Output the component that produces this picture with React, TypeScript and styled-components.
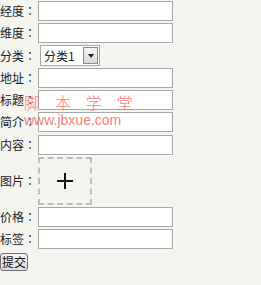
import styled, { createGlobalStyle } from "styled-components";

// page defaults: no body margin, off-white paper colour
const GlobalStyle = createGlobalStyle`
  body {
    margin: 0;
    background: #f5f5f0;
    font-family: "Noto Sans CJK SC", "Liberation Sans", sans-serif;
    font-size: 12px;
    color: #222;
  }
`;

const Page = styled.form`
  position: relative;
  display: flex;
  flex-direction: column;
  gap: 2.25px;
  padding-top: 1px;
  width: 261px;
`;

const Row = styled.div<{ $tall?: boolean }>`
  display: flex;
  align-items: center;
  height: ${(p) => (p.$tall ? "48px" : "20px")};
`;

const Label = styled.label`
  width: 36px;
  margin-right: 2px;
  white-space: nowrap;
  line-height: 20px;
`;

// full-width colon drawn centred in its cell, as in the reference
const Colon = styled.span`
  font-family: "Noto Sans CJK TC", "Noto Sans CJK SC", sans-serif;
`;

const TextInput = styled.input`
  box-sizing: border-box;
  width: 135px;
  height: 20px;
  border: 1px solid #a8a8a8;
  background: #fff;
  padding: 0 3px;
  font-size: 12px;
  outline: none;
`;

const SelectBox = styled.div`
  position: relative;
  box-sizing: border-box;
  margin-left: 2px;
  width: 60px;
  height: 21px;
  border: 1px solid #a8a8a8;
  background: #fff;
`;

const Select = styled.select`
  appearance: none;
  box-sizing: border-box;
  width: 100%;
  height: 100%;
  border: none;
  background: transparent;
  padding: 0 0 0 3px;
  font-family: "Noto Sans CJK SC", "Liberation Sans", sans-serif;
  font-size: 12px;
  color: #222;
`;

// the old-style grey drop button sits over the right end of the select
const DropButton = styled.span`
  position: absolute;
  top: 1px;
  right: 1px;
  bottom: 1px;
  width: 15px;
  box-sizing: border-box;
  border: 1px solid #8a8a8a;
  background: linear-gradient(#f4f4f4, #d8d8d8);
  display: flex;
  align-items: center;
  justify-content: center;
  pointer-events: none;
`;

const Arrow = styled.span`
  width: 0;
  height: 0;
  border-left: 3.5px solid transparent;
  border-right: 3.5px solid transparent;
  border-top: 4px solid #222;
`;

const Upload = styled.div`
  box-sizing: border-box;
  width: 54px;
  height: 48px;
  border: 2px dashed #bdbdbd;
  display: flex;
  align-items: center;
  justify-content: center;
`;

const SubmitButton = styled.button`
  align-self: flex-start;
  margin-top: 1px;
  height: 18px;
  padding: 0 1px;
  border: 1px solid #707070;
  border-radius: 3px;
  background: linear-gradient(#f2f2f2, #dedede);
  font-family: "Noto Sans CJK SC", "Liberation Sans", sans-serif;
  font-size: 12px;
  line-height: 14px;
  color: #111;
`;

// red site watermark stamped over the middle of the form
const Watermark = styled.div`
  position: absolute;
  left: 24px;
  top: 92px;
  color: #ee7474;
  opacity: 0.9;
  pointer-events: none;
`;

const MarkTitle = styled.div`
  font-size: 16px;
  font-weight: 300;
  line-height: 20px;
  letter-spacing: 5.7px;
`;

const MarkUrl = styled.div`
  font-family: "Liberation Sans", Arial, sans-serif;
  font-size: 14px;
  line-height: 16px;
`;

const fields = ["经度", "维度"];
const moreFields = ["地址", "标题", "简介", "内容"];

export default function App() {
  return (
    <>
      <GlobalStyle />
      <Page onSubmit={(e) => e.preventDefault()}>
        {fields.map((f) => (
          <Row key={f}>
            <Label>
              {f}
              <Colon>：</Colon>
            </Label>
            <TextInput />
          </Row>
        ))}
        <Row>
          <Label>
            分类<Colon>：</Colon>
          </Label>
          <SelectBox>
            <Select defaultValue="1">
              <option value="1">分类1</option>
            </Select>
            <DropButton>
              <Arrow />
            </DropButton>
          </SelectBox>
        </Row>
        {moreFields.map((f) => (
          <Row key={f}>
            <Label>
              {f}
              <Colon>：</Colon>
            </Label>
            <TextInput />
          </Row>
        ))}
        <Row $tall>
          <Label>
            图片<Colon>：</Colon>
          </Label>
          <Upload>
            <svg width="18" height="18" viewBox="0 0 18 18">
              <path d="M9 1v16M1 9h16" stroke="#111" strokeWidth="2" />
            </svg>
          </Upload>
        </Row>
        <Row>
          <Label>
            价格<Colon>：</Colon>
          </Label>
          <TextInput />
        </Row>
        <Row>
          <Label>
            标签<Colon>：</Colon>
          </Label>
          <TextInput />
        </Row>
        <SubmitButton type="submit">提交</SubmitButton>
        <Watermark>
          <MarkTitle>脚 本 学 堂</MarkTitle>
          <MarkUrl>www.jbxue.com</MarkUrl>
        </Watermark>
      </Page>
    </>
  );
}
